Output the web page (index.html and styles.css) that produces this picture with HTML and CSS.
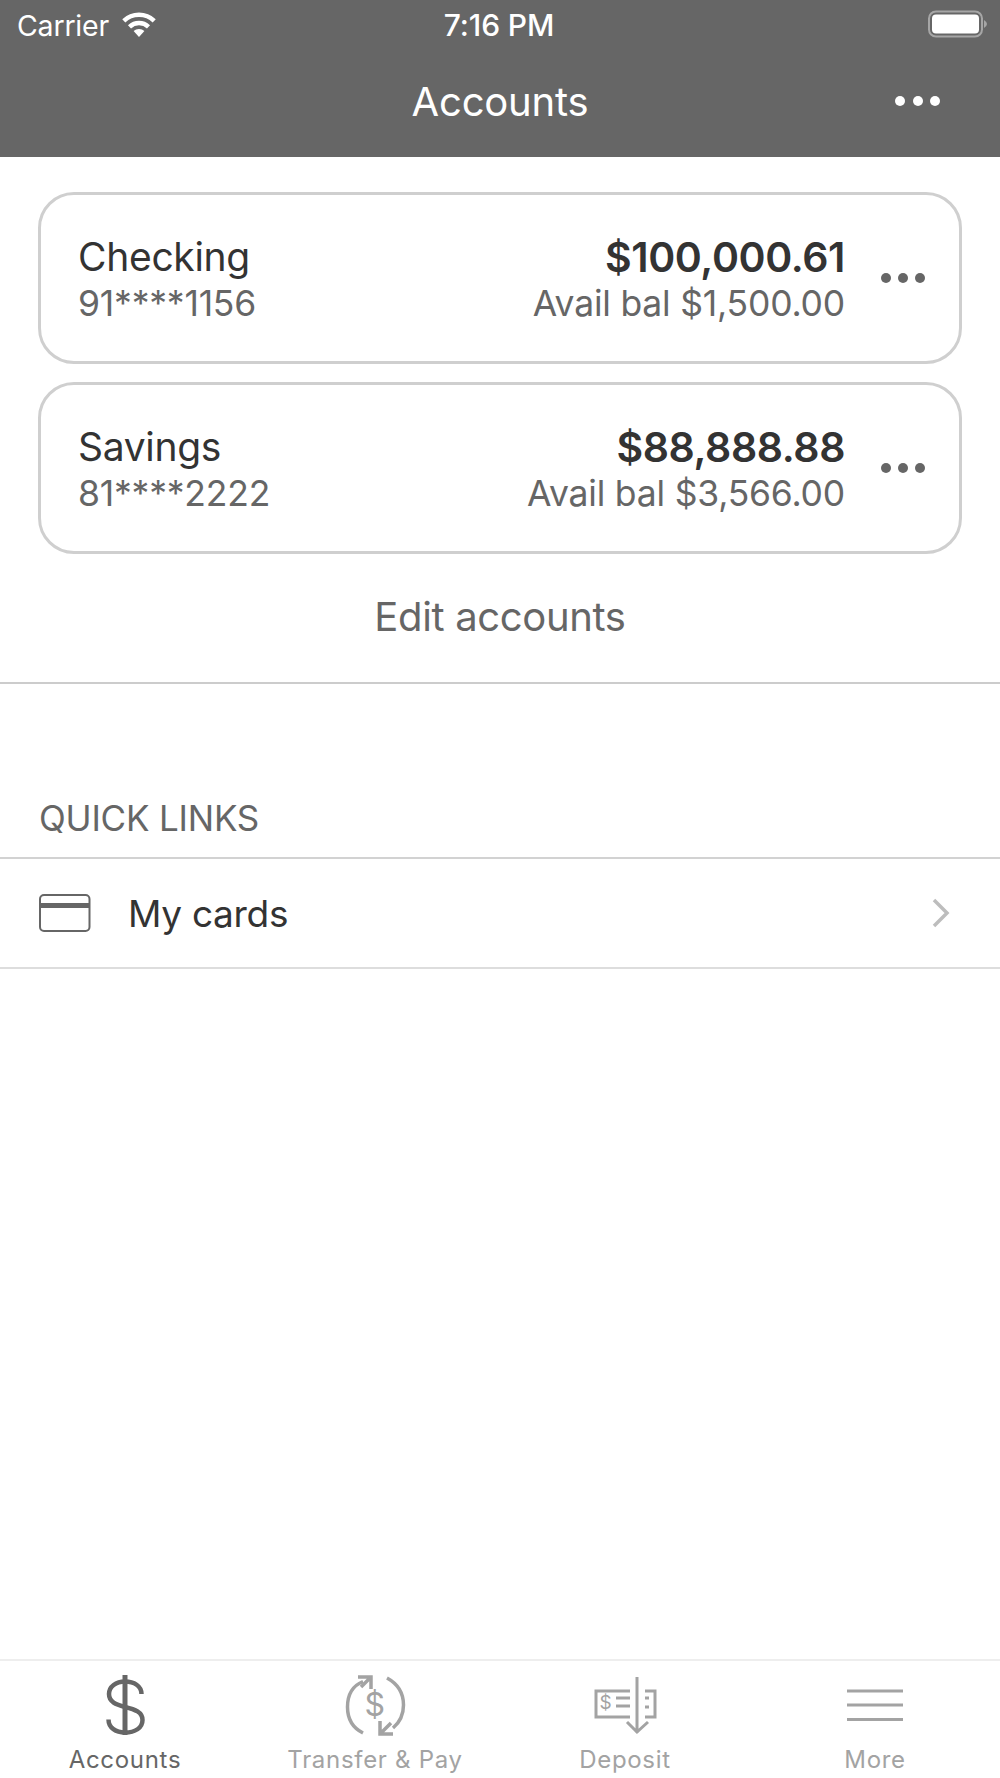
FILE: index.html
```html
<!DOCTYPE html>
<html lang="en">
<head>
<meta charset="utf-8">
<title>Accounts</title>
<link rel="stylesheet" href="styles.css">
</head>
<body>
<div class="app">
  <header class="header">
    <div class="status">
      <div class="status-left">
        <span>Carrier</span>
        <svg class="wifi" width="38" height="28" viewBox="0 0 38 28"><path d="M19 27 L13.600 21 A8 8 0 0 1 24.400 21 Z" fill="#fff"/><path d="M9.500 16.800 A14 14 0 0 1 28.500 16.800" fill="none" stroke="#fff" stroke-width="4.500"/><path d="M3.800 10.800 A22 22 0 0 1 34.200 10.800" fill="none" stroke="#fff" stroke-width="4.500"/></svg>
      </div>
      <div class="status-time">7:16 PM</div>
      <svg class="battery" width="60" height="28" viewBox="0 0 60 28"><rect x="1" y="1.500" width="53" height="25" rx="7" fill="none" stroke="#a6a6a6" stroke-width="2"/><rect x="4" y="4.500" width="47" height="19" rx="4" fill="#fff"/><path d="M56 10 Q59 12 59 14 Q59 16 56 18 Z" fill="#a6a6a6"/></svg>
    </div>
    <div class="nav">
      <h1 class="nav-title">Accounts</h1>
      <div class="dots dots-light"><i></i><i></i><i></i></div>
    </div>
  </header>

  <main class="main">
    <section class="cards">
      <article class="card">
        <div class="card-left">
          <div class="name">Checking</div>
          <div class="sub">91****1156</div>
        </div>
        <div class="card-right">
          <div class="amount">$100,000.61</div>
          <div class="sub">Avail bal $1,500.00</div>
        </div>
        <div class="dots dots-dark"><i></i><i></i><i></i></div>
      </article>
      <article class="card">
        <div class="card-left">
          <div class="name">Savings</div>
          <div class="sub">81****2222</div>
        </div>
        <div class="card-right">
          <div class="amount">$88,888.88</div>
          <div class="sub">Avail bal $3,566.00</div>
        </div>
        <div class="dots dots-dark"><i></i><i></i><i></i></div>
      </article>
    </section>
    <div class="edit">Edit accounts</div>
    <h2 class="links-title">QUICK LINKS</h2>
    <div class="link-row">
      <svg class="card-icon" width="52" height="38" viewBox="0 0 52 38"><rect x="1" y="1" width="49.500" height="36" rx="4" fill="none" stroke="#666" stroke-width="2"/><rect x="1" y="9" width="49.500" height="5" fill="#666"/></svg>
      <span class="link-label">My cards</span>
      <svg class="chevron" width="18" height="30" viewBox="0 0 18 30"><path d="M2 2 L15 15 L2 28" fill="none" stroke="#bdbdbd" stroke-width="3.500"/></svg>
    </div>
  </main>

  <nav class="tabs">
    <div class="tab tab-active">
      <svg width="64" height="64" viewBox="0 0 64 64"><path d="M48.500 19 C48.500 11 41 6.500 32 6.500 C23 6.500 16 11.500 16 19 C16 27 23 29.500 32 32 C42 34.500 49.500 37 49.500 45 C49.500 53 42 57.500 32 57.500 C23 57.500 15.500 53 15.500 44.500" fill="none" stroke="#666" stroke-width="4.500"/><path d="M32 0 V60" stroke="#666" stroke-width="5"/></svg>
      <span>Accounts</span>
    </div>
    <div class="tab">
      <svg width="64" height="64" viewBox="0 0 64 64"><path d="M20 6.500 C9 11 4.500 21 4.500 32 C4.500 44 10 53 20 58" fill="none" stroke="#a3a3a3" stroke-width="3.500"/><path d="M44 3 C55 9 60.500 19 60.500 30 C60.500 40 56 48 50 53" fill="none" stroke="#a3a3a3" stroke-width="3.500"/><path d="M15 2 H28 V14 M27 3 L18 12" fill="none" stroke="#a3a3a3" stroke-width="3.500"/><path d="M50 59 H37 V46 M38 58 L48 48" fill="none" stroke="#a3a3a3" stroke-width="3.500"/><text class="tab-dollar" x="32" y="41" text-anchor="middle">$</text></svg>
      <span>Transfer &amp; Pay</span>
    </div>
    <div class="tab">
      <svg width="64" height="64" viewBox="0 0 64 64"><path d="M37 16 H3 V42 H37 M52 16 H62 V42 H52" fill="none" stroke="#a3a3a3" stroke-width="3"/><path d="M44 2 V58 M34 47 L44 57 L55 47" fill="none" stroke="#a3a3a3" stroke-width="3"/><path d="M23 23 H37 M23 31 H37" stroke="#a3a3a3" stroke-width="3"/><path d="M52 23 H56 M52 32 H56" stroke="#a3a3a3" stroke-width="3"/><text class="check-dollar" x="13" y="34" text-anchor="middle">$</text></svg>
      <span>Deposit</span>
    </div>
    <div class="tab">
      <svg width="64" height="64" viewBox="0 0 64 64"><path d="M4 16 H60 M4 30 H60 M4 44.500 H60" stroke="#a3a3a3" stroke-width="3"/></svg>
      <span>More</span>
    </div>
  </nav>
</div>
</body>
</html>
```

FILE: styles.css
```css
* { box-sizing: border-box; }
html, body { margin: 0; padding: 0; background: #fff; }
.app {
  width: 1000px;
  height: 1778px;
  display: flex;
  flex-direction: column;
  font-family: Inter, "Liberation Sans", sans-serif;
  overflow: hidden;
}
.header { height: 157px; background: #666; color: #fff; flex: none; }
.status {
  height: 50px;
  display: grid;
  grid-template-columns: 1fr auto 1fr;
  align-items: center;
  padding: 0 12px 0 17px;
  font-size: 28.500px;
}
.status-left { display: flex; align-items: center; gap: 11px; letter-spacing: -0.2px; }
.wifi { margin-top: -3px; }
.status-time { font-size: 30px; font-weight: 500; margin-right: 7px; letter-spacing: -0.1px; }
.battery { justify-self: end; margin-top: -3px; }
.nav { position: relative; height: 107px; padding-top: 30px; text-align: center; }
.nav-title { margin: 0; font-size: 40px; line-height: 44px; font-weight: 400; letter-spacing: -0.2px; }
.dots { display: flex; gap: 7.500px; }
.dots i { display: block; width: 10px; height: 10px; border-radius: 50%; }
.dots-light { position: absolute; right: 60px; top: 46px; }
.dots-light i { background: #fff; }
.dots-dark { gap: 7px; margin-top: -4px; }
.dots-dark i { background: #666; }
.main { flex: 1; }
.cards { padding: 35px 38px 0; display: flex; flex-direction: column; gap: 18px; }
.card {
  height: 172px;
  border: 3px solid #cfcfcf;
  border-radius: 36px;
  display: flex;
  align-items: center;
  padding: 4px 34px 0 37px;
}
.card-left { flex: 1; }
.card-right { text-align: right; margin-right: 36px; }
.name { font-size: 39px; line-height: 48px; color: #333; letter-spacing: -0.3px; }
.amount { font-size: 41px; line-height: 48px; color: #333; font-weight: 600; letter-spacing: -0.4px; }
.sub { font-size: 35.500px; line-height: 46px; color: #666; letter-spacing: -0.2px; }
.edit {
  height: 130px;
  padding-top: 39px;
  border-bottom: 2px solid #ccc;
  text-align: center;
  font-size: 40px;
  line-height: 48px;
  color: #666;
  letter-spacing: -0.35px;
}
.links-title {
  margin: 0;
  height: 175px;
  padding: 112px 0 0 39px;
  border-bottom: 2px solid #d2d2d2;
  font-size: 35px;
  line-height: 44px;
  font-weight: 400;
  color: #666;
  letter-spacing: -0.2px;
}
.link-row {
  height: 110px;
  display: flex;
  align-items: center;
  padding: 0 50px 0 39px;
  border-bottom: 2px solid #ddd;
}
.link-label { flex: 1; margin-left: 37px; font-size: 37px; color: #333; letter-spacing: -0.3px; }
.tabs {
  flex: none;
  height: 119px;
  border-top: 2px solid #eee;
  display: grid;
  grid-template-columns: repeat(4, 250px);
}
.tab {
  display: flex;
  flex-direction: column;
  align-items: center;
  padding-top: 14px;
  font-size: 24px;
  line-height: 30px;
  color: #a3a3a3;
  font-weight: 400;
  letter-spacing: 0.7px;
}
.tab span { margin-top: 6px; }
.tab-active { color: #666; }
.tab-dollar { font-size: 32px; font-family: Inter, sans-serif; fill: #a3a3a3; }
.check-dollar { font-size: 19px; font-family: Inter, sans-serif; fill: #a3a3a3; }
```
